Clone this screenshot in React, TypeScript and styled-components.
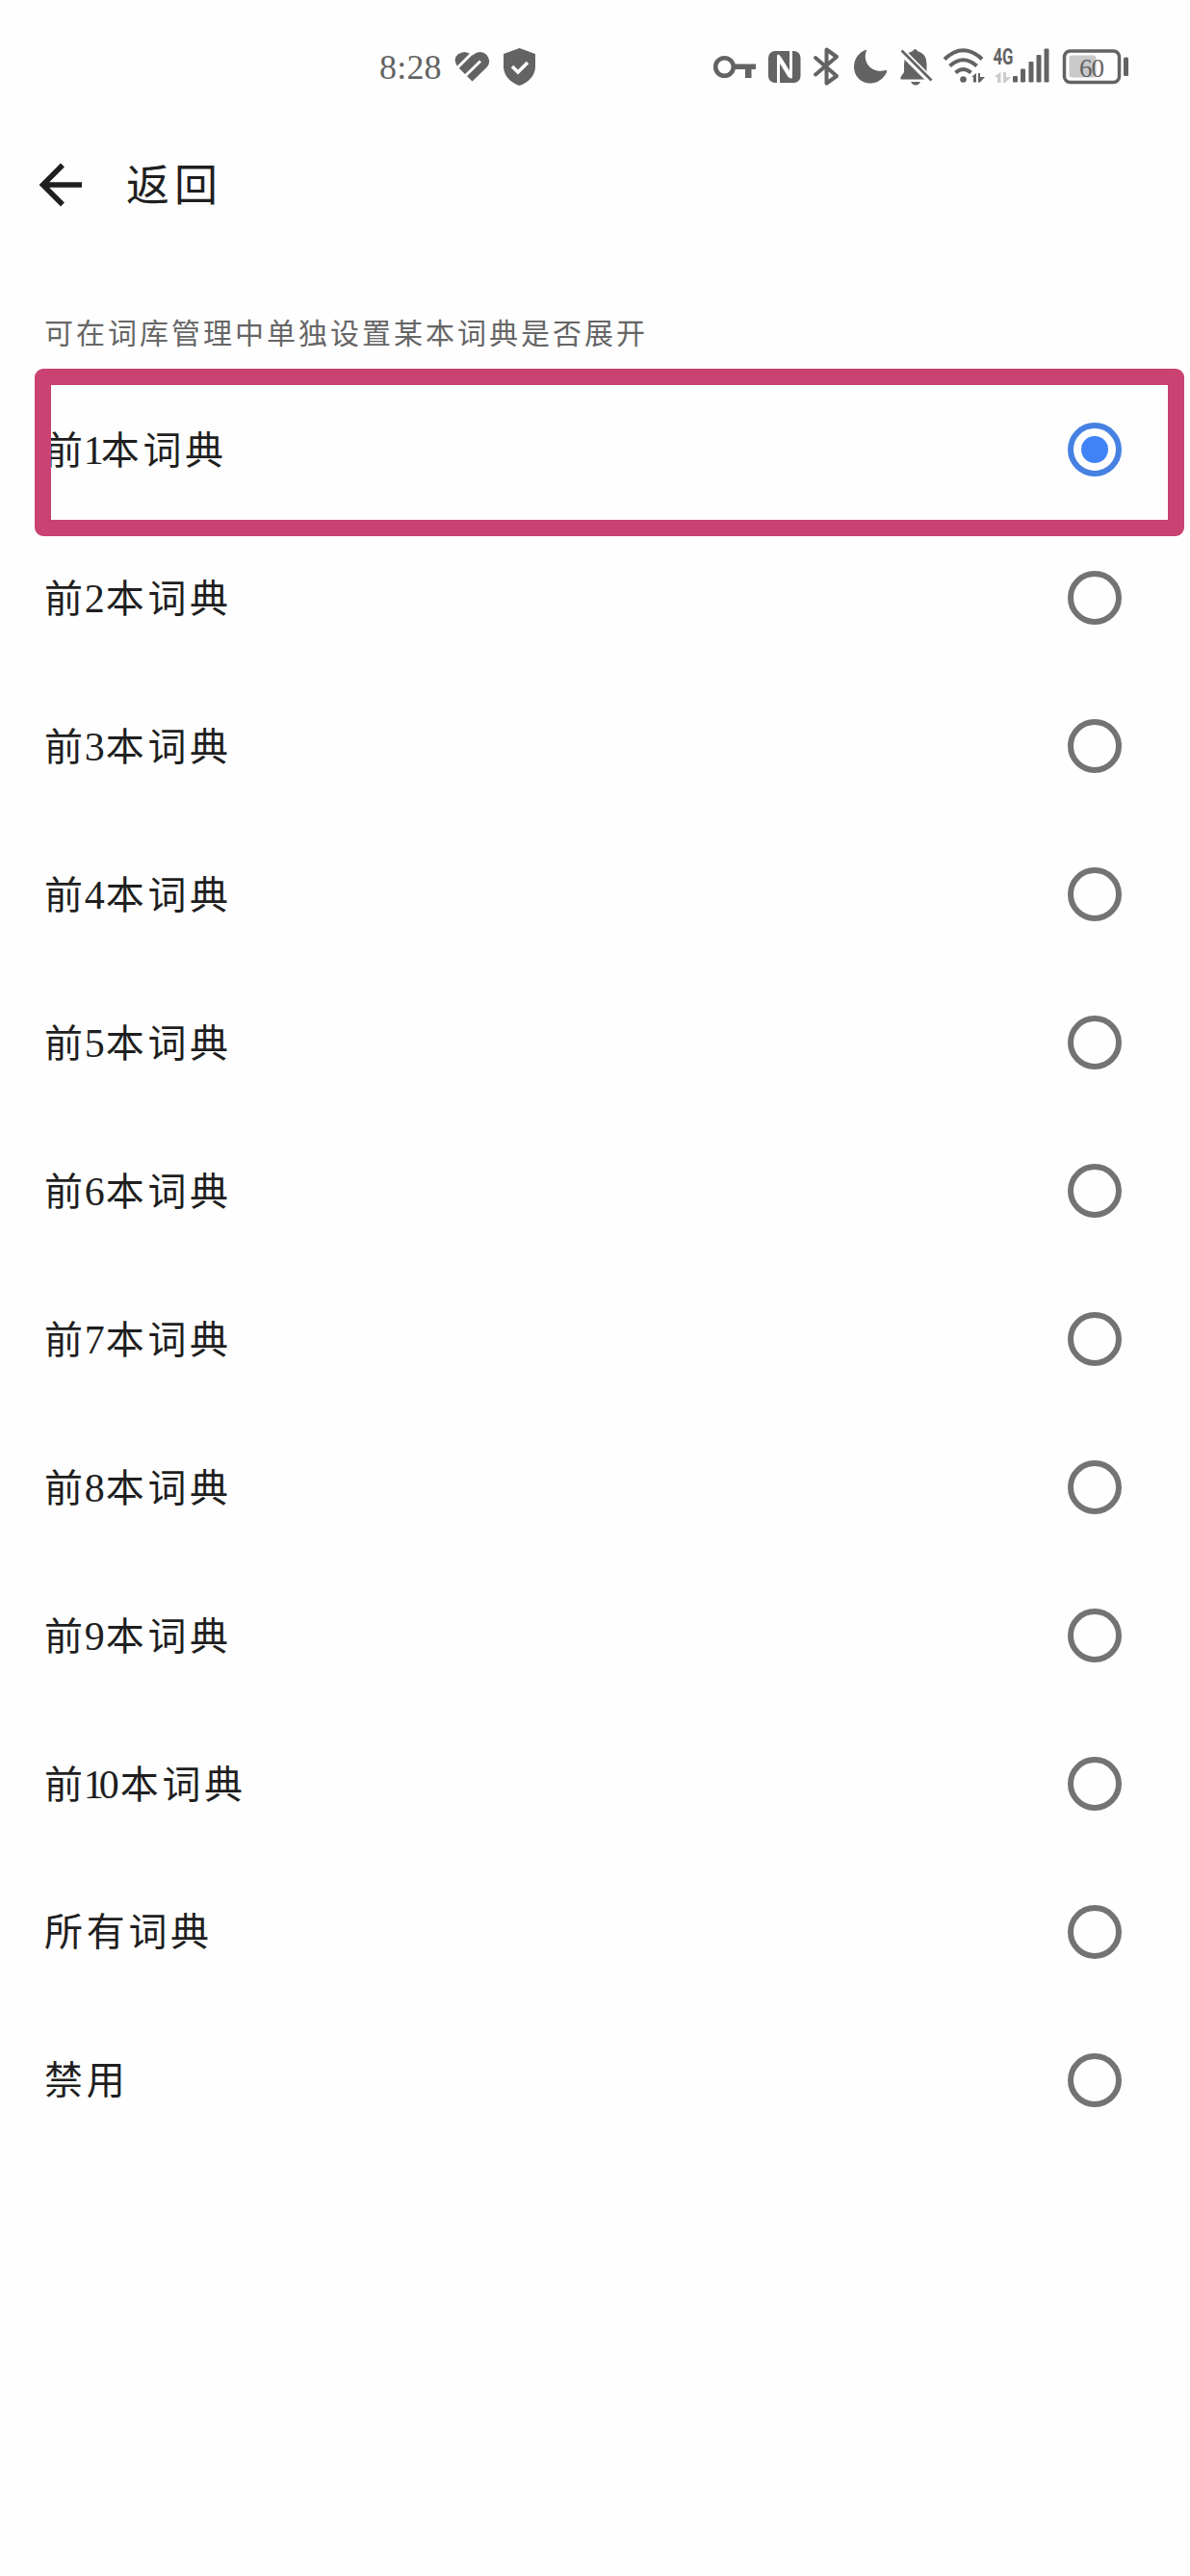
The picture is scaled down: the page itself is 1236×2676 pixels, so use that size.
import React, { useState } from "react";
import styled, { createGlobalStyle } from "styled-components";

const GREY = "#636363";
const INK = "#1f1f21";

const GlobalStyle = createGlobalStyle`
  * { box-sizing: border-box; }
  body { margin: 0; background: #fefefe; }
`;

const Screen = styled.main`
  display: flex;
  flex-direction: column;
  width: 1236px;
  height: 2676px;
  background: #fefefe;
  color: ${INK};
  font-family: "Liberation Serif", "Noto Sans CJK SC", serif;
  overflow: hidden;
`;

const StatusBar = styled.header`
  display: flex;
  align-items: center;
  justify-content: space-between;
  height: 140px;
  padding: 0 60px 0 394px;
  color: ${GREY};
`;

const StatusGroup = styled.div`
  display: flex;
  align-items: center;
  height: 60px;
`;

const Clock = styled.time`
  width: 72px;
  font-size: 36px;
  line-height: 62px;
  letter-spacing: 0.2px;
`;

const Glyph = styled.svg`
  display: block;
  flex: none;
  height: 60px;
  fill: currentColor;
`;

const TopBar = styled.nav`
  display: flex;
  align-items: center;
  height: 104px;
  padding-left: 40px;
`;

const BackButton = styled.button`
  display: flex;
  width: 91px;
  height: 60px;
  padding: 0;
  border: 0;
  background: none;
  color: ${INK};
`;

const Title = styled.h1`
  margin: 0;
  padding-top: 3px;
  font-size: 45px;
  font-weight: 400;
  line-height: 60px;
  letter-spacing: 5px;
`;

const Hint = styled.p`
  height: 146px;
  margin: 0;
  padding: 83px 0 0 46px;
  color: #666;
  font-size: 30px;
  line-height: 40px;
  letter-spacing: 3px;
`;

const List = styled.div`
  display: flex;
  flex-direction: column;
`;

const Row = styled.label`
  position: relative;
  display: flex;
  align-items: center;
  justify-content: space-between;
  height: 154px;
  padding: 0 71px 0 46px;
`;

const Label = styled.span`
  padding-top: 2px;
  font-size: 40px;
  line-height: 60px;
  letter-spacing: 3.7px;
`;

const Digit = styled.span<{ $narrow: boolean }>`
  display: inline-block;
  width: ${(p) => (p.$narrow ? 18 : 22)}px;
  margin-left: ${(p) => (p.$narrow ? -3 : -2)}px;
  font-size: 42px;
  letter-spacing: 0;
`;

const Radio = styled.input`
  appearance: none;
  display: grid;
  place-items: center;
  width: 56px;
  height: 56px;
  margin: 0;
  border: 6px solid #737373;
  border-radius: 50%;

  &:checked { border-color: #4681e2; }
  &:checked::before {
    content: "";
    width: 28px;
    height: 28px;
    border-radius: 50%;
    background: #4083f6;
  }
`;

const Highlight = styled.span`
  position: absolute;
  top: -7px;
  left: 36px;
  width: 1194px;
  height: 174px;
  border: 17px solid #c94272;
  border-radius: 9px;
  pointer-events: none;
`;

type Part = { x: number; w: number; children: React.ReactNode };
const Icon = ({ x, w, children }: Part) => (
  <Glyph width={w} viewBox={`${x} 40 ${w} 60`}>{children}</Glyph>
);

const options = [
  ...Array.from({ length: 10 }, (_, i) => `前${i + 1}本词典`),
  "所有词典",
  "禁用",
];

export default function App() {
  const [selected, setSelected] = useState(0);
  return (
    <Screen>
      <GlobalStyle />
      <StatusBar>
        <StatusGroup>
          <Clock>8:28</Clock>
          <Icon x={466} w={50}>
            <path d="M490.500 84.500L475 69Q470 61 475.500 56.500Q483 51 490.500 57.500Q499 51 505.500 57Q511 64 505.500 70Z" />
            <path d="M472.500 73L490 55.500M481.500 80.500L499 63.500" fill="none" stroke="#fefefe" strokeWidth="3" />
          </Icon>
          <Icon x={516} w={46}>
            <path d="M539.500 50L556 56V70Q555 83 539.500 89Q524 83 523 70V56Z" />
            <path d="M532 69L538 75L548 65" fill="none" stroke="#fefefe" strokeWidth="3.600" />
          </Icon>
        </StatusGroup>
        <StatusGroup>
          <Icon x={738} w={54}>
            <circle cx="752.500" cy="69.500" r="9.300" fill="none" stroke="currentColor" strokeWidth="4.600" />
            <path d="M762 66.500H785V72H780.500V81H774V72H762Z" />
          </Icon>
          <Icon x={792} w={46}>
            <rect x="798" y="53" width="33.500" height="33" rx="7" />
            <path d="M808.500 87V58L821.500 80V52" fill="none" stroke="#fefefe" strokeWidth="3" strokeLinejoin="round" />
            <path d="M809 60L821 79.500" stroke="#fefefe" strokeWidth="4.500" />
          </Icon>
          <Icon x={838} w={44}>
            <path d="M847 60L869 79L858.500 86.500V51.500L869 59L847 77.500" fill="none" stroke="currentColor" strokeWidth="4" strokeLinecap="round" strokeLinejoin="round" />
          </Icon>
          <Icon x={882} w={48}>
            <path d="M900 52.500C895 65 906 77 920 73Q922 72.500 921 75C917 83 910 87 903 86.500C893 86 887 78 887 69.500C887 61 892 54.500 899 52Q900.500 51.500 900 52.500Z" />
          </Icon>
          <Icon x={930} w={44}>
            <path d="M939 75V67Q939 55.500 948 53Q950.500 49 953 53Q962.500 56 962.500 66V77L966 82.500H935.500V80Z" />
            <path d="M946 85H956Q954 88.500 951 88.500Q948 88.500 946 85Z" />
            <path d="M935 52L970 87" stroke="#fefefe" strokeWidth="7.500" />
            <path d="M936.500 52.500L967.500 83.500" stroke="currentColor" strokeWidth="2.600" />
          </Icon>
          <Icon x={974} w={54}>
            <g fill="none" stroke="currentColor" strokeWidth="4">
              <path d="M981 61.500Q1000.500 43 1020 61.500" />
              <path d="M986.500 68.500Q1000.500 56 1014.500 68.500" />
              <path d="M992.500 75.500Q1000.500 68.500 1008.500 75.500" />
            </g>
            <circle cx="1000.500" cy="82.500" r="3.300" />
            <path d="M1009 80L1014 76V85.500H1011V80ZM1016 76H1018V80L1023 80L1018 85.500H1016Z" />
          </Icon>
          <Icon x={1028} w={68}>
            <text x="1031.500" y="67" fontFamily="Roboto, sans-serif" fontSize="23" fontWeight="700" textLength="21" lengthAdjust="spacingAndGlyphs">4G</text>
            <path d="M1032.500 80L1039.500 74.500V86H1036V80ZM1042 75H1045V80L1050 80L1044 86H1042Z" fill="#cdcdcd" />
            <rect x="1052" y="79" width="5" height="6.500" rx="1" />
            <rect x="1060" y="71.500" width="5" height="14" rx="1" />
            <rect x="1068.500" y="64" width="5" height="21.500" rx="1" />
            <rect x="1076.500" y="57" width="5" height="28.500" rx="1" />
            <rect x="1084.500" y="50.500" width="5" height="35" rx="1" />
          </Icon>
          <Icon x={1096} w={80}>
            <rect x="1105.500" y="53" width="57" height="32.500" rx="6" fill="none" stroke="currentColor" strokeWidth="3.500" />
            <rect x="1110.500" y="57.500" width="28" height="23" rx="3" fill="#c9c9c9" />
            <rect x="1167" y="59.500" width="5" height="19.500" rx="1.500" />
            <text x="1121" y="80" fontFamily="Liberation Serif, serif" fontSize="27" textLength="26">60</text>
          </Icon>
        </StatusGroup>
      </StatusBar>
      <TopBar>
        <BackButton aria-label="返回">
          <Glyph width="50" viewBox="40 162 50 60">
            <path d="M85 192H45M65 171.500L44.500 192L65 212.500" fill="none" stroke="currentColor" strokeWidth="5.500" />
          </Glyph>
        </BackButton>
        <Title>返回</Title>
      </TopBar>
      <Hint>可在词库管理中单独设置某本词典是否展开</Hint>
      <List role="radiogroup">
        {options.map((name, index) => (
          <Row key={name}>
            <Label>
              {name.split("").map((char, i) =>
                /\d/.test(char) ? <Digit key={i} $narrow={char === "1"}>{char}</Digit> : char
              )}
            </Label>
            <Radio type="radio" name="expand" checked={selected === index} onChange={() => setSelected(index)} />
            {index === 0 && <Highlight />}
          </Row>
        ))}
      </List>
    </Screen>
  );
}
